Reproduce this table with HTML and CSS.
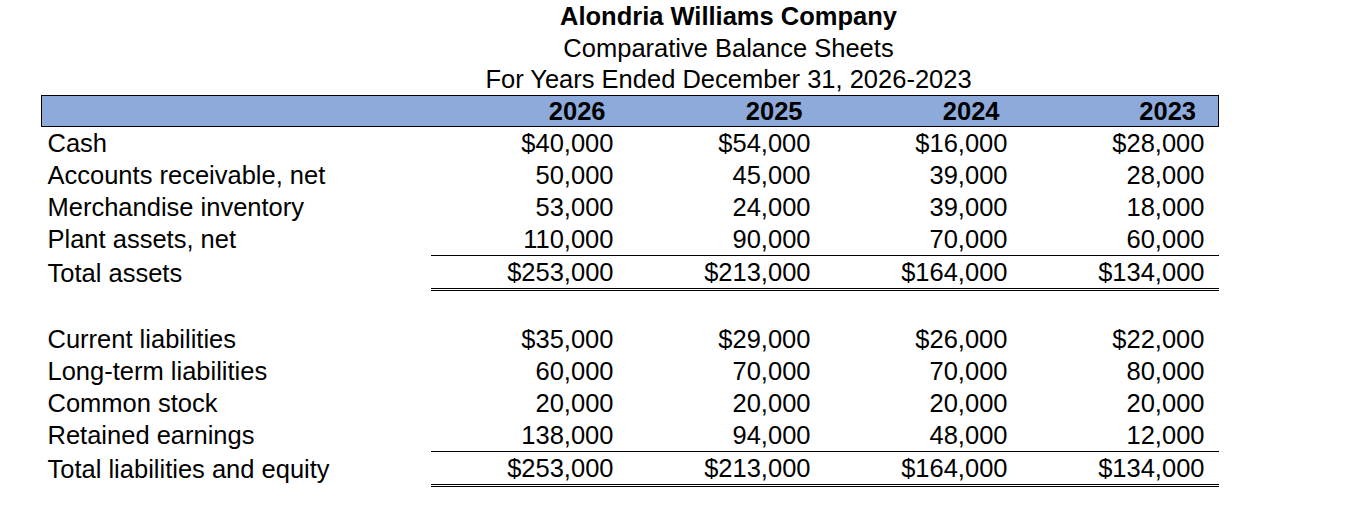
FILE: index.html
```html
<!DOCTYPE html>
<html lang="en">
<head>
<meta charset="utf-8">
<title>Alondria Williams Company - Comparative Balance Sheets</title>
<link rel="stylesheet" href="styles.css">
</head>
<body>
<table class="sheet">
  <colgroup>
    <col class="col-label">
    <col class="col-num">
    <col class="col-num">
    <col class="col-num">
    <col class="col-num">
  </colgroup>
  <tbody>
    <tr class="title-row"><td></td><td colspan="3" class="title company">Alondria Williams Company</td><td></td></tr>
    <tr class="title-row"><td></td><td colspan="3" class="title">Comparative Balance Sheets</td><td></td></tr>
    <tr class="title-row last"><td></td><td colspan="3" class="title">For Years Ended December 31, 2026-2023</td><td></td></tr>
    <tr class="head-row"><td class="label"></td><th>2026</th><th>2025</th><th>2024</th><th>2023</th></tr>
    <tr><td class="label">Cash</td><td class="num">$40,000</td><td class="num">$54,000</td><td class="num">$16,000</td><td class="num">$28,000</td></tr>
    <tr><td class="label">Accounts receivable, net</td><td class="num">50,000</td><td class="num">45,000</td><td class="num">39,000</td><td class="num">28,000</td></tr>
    <tr><td class="label">Merchandise inventory</td><td class="num">53,000</td><td class="num">24,000</td><td class="num">39,000</td><td class="num">18,000</td></tr>
    <tr class="sub-row"><td class="label">Plant assets, net</td><td class="num">110,000</td><td class="num">90,000</td><td class="num">70,000</td><td class="num">60,000</td></tr>
    <tr class="total-row"><td class="label">Total assets</td><td class="num">$253,000</td><td class="num">$213,000</td><td class="num">$164,000</td><td class="num">$134,000</td></tr>
    <tr class="blank-row"><td></td><td></td><td></td><td></td><td></td></tr>
    <tr><td class="label">Current liabilities</td><td class="num">$35,000</td><td class="num">$29,000</td><td class="num">$26,000</td><td class="num">$22,000</td></tr>
    <tr><td class="label">Long-term liabilities</td><td class="num">60,000</td><td class="num">70,000</td><td class="num">70,000</td><td class="num">80,000</td></tr>
    <tr><td class="label">Common stock</td><td class="num">20,000</td><td class="num">20,000</td><td class="num">20,000</td><td class="num">20,000</td></tr>
    <tr class="sub-row"><td class="label">Retained earnings</td><td class="num">138,000</td><td class="num">94,000</td><td class="num">48,000</td><td class="num">12,000</td></tr>
    <tr class="total-row"><td class="label">Total liabilities and equity</td><td class="num">$253,000</td><td class="num">$213,000</td><td class="num">$164,000</td><td class="num">$134,000</td></tr>
  </tbody>
</table>
</body>
</html>
```

FILE: styles.css
```css
html, body {
  margin: 0;
  padding: 0;
  background: #ffffff;
}

body {
  font-family: "Liberation Sans", Arial, sans-serif;
  font-size: 25.5px;
  color: #000000;
}

.sheet {
  border-collapse: collapse;
  margin-left: 41px;
  table-layout: fixed;
  width: 1178px;
}

.col-label {
  width: 389px;
}

.col-num {
  width: 197px;
}

.sheet td,
.sheet th {
  padding: 0;
  height: 32px;
  line-height: 32px;
  white-space: nowrap;
  vertical-align: middle;
}

.title-row td {
  height: 32px;
  line-height: 32px;
}

.title-row.last td {
  height: 31px;
  line-height: 31px;
}

.title {
  text-align: center;
  padding-left: 5px !important;
}

.company {
  font-weight: bold;
}

.head-row td,
.head-row th {
  background: #8eaadb;
  border-top: 1px solid #000;
  border-bottom: 1px solid #000;
  height: 30px;
  line-height: 30px;
}

.head-row td:first-child {
  border-left: 1px solid #000;
}

.head-row th:last-child {
  border-right: 1px solid #000;
}

.head-row th {
  font-weight: bold;
  text-align: right;
  padding-right: 22px;
}

.label {
  padding-left: 6px !important;
  text-align: left;
}

.num {
  text-align: right;
  padding-right: 14px !important;
}

.sub-row .num {
  border-bottom: 1px solid #000;
}

.total-row .num {
  border-bottom: 3px double #000;
}

.blank-row td {
  height: 32px;
}
```
